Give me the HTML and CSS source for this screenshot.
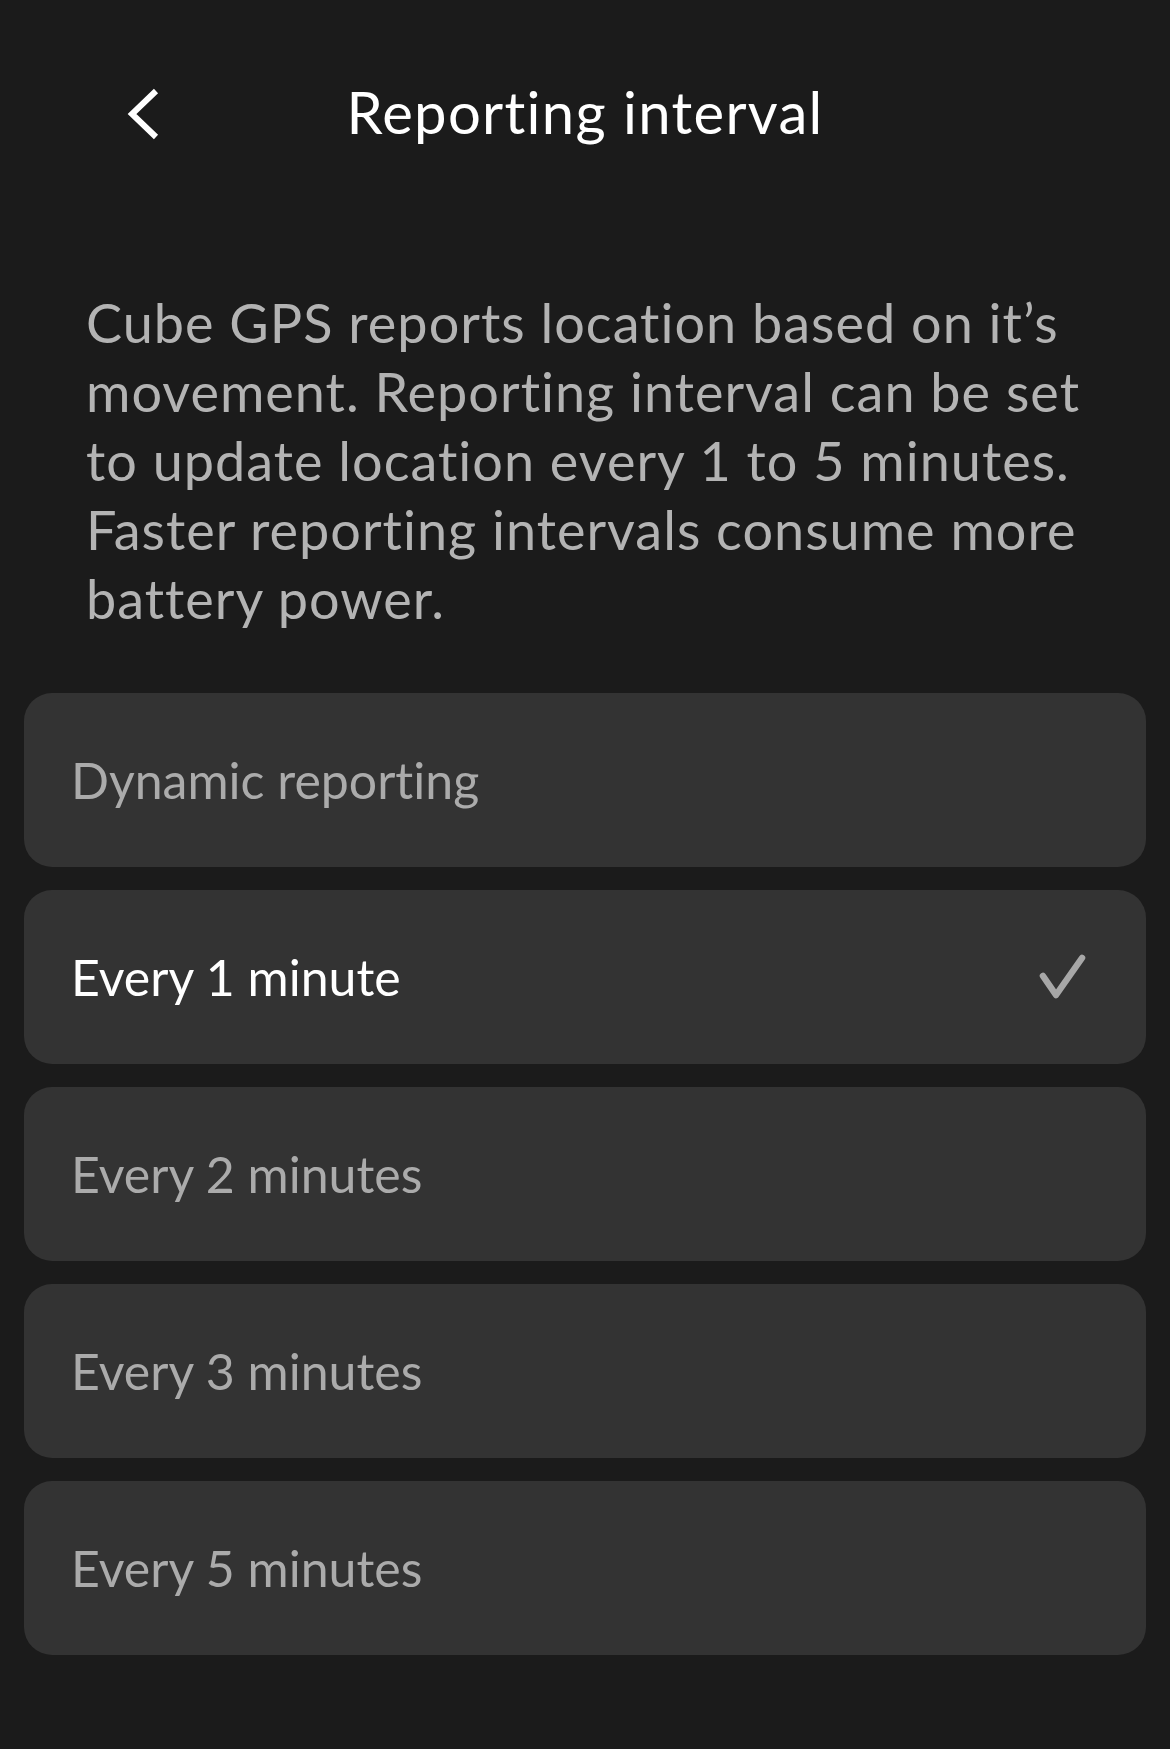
FILE: index.html
```html
<!DOCTYPE html>
<html lang="en">
<head>
<meta charset="utf-8">
<title>Reporting interval</title>
<link rel="stylesheet" href="styles.css">
</head>
<body>
<div class="screen">
  <header class="topbar">
    <button class="back" aria-label="Back">
      <svg width="34" height="52" viewBox="0 0 34 52"><polyline points="30,3 6,26 30,49" fill="none" stroke="#ffffff" stroke-width="6" stroke-linecap="butt" stroke-linejoin="miter"/></svg>
    </button>
    <h1 class="title">Reporting interval</h1>
  </header>
  <p class="intro">Cube GPS reports location based on it’s movement. Reporting interval can be set to update location every 1 to 5 minutes. Faster reporting intervals consume more battery power.</p>
  <ul class="options">
    <li class="option">Dynamic reporting</li>
    <li class="option selected">Every 1 minute
      <svg class="check" width="52" height="48" viewBox="0 0 52 48"><polyline points="6,23 19,42 45,5" fill="none" stroke="#a7a7a7" stroke-width="6.5" stroke-linecap="round" stroke-linejoin="round"/></svg>
    </li>
    <li class="option">Every 2 minutes</li>
    <li class="option">Every 3 minutes</li>
    <li class="option">Every 5 minutes</li>
  </ul>
</div>
</body>
</html>
```
FILE: styles.css
```css
html, body {
  margin: 0;
  padding: 0;
  background: #1b1b1b;
}
.screen {
  width: 1170px;
  min-height: 1749px;
  background: #1b1b1b;
  font-family: "Lato", "Open Sans", sans-serif;
  font-variant-ligatures: none;
  color: #ffffff;
}
.topbar {
  position: relative;
  height: 224px;
  display: flex;
  align-items: center;
  justify-content: center;
}
.back {
  position: absolute;
  left: 126px;
  top: 88px;
  padding: 0;
  margin: 0;
  border: 0;
  background: none;
  width: 34px;
  height: 52px;
}
.back svg {
  display: block;
}
.title {
  margin: 0;
  font-weight: 400;
  font-size: 58px;
  letter-spacing: 1.3px;
  line-height: 70px;
  color: #ffffff;
}
.intro {
  margin: 0;
  padding: 64px 72px 0 86px;
  font-size: 54px;
  letter-spacing: 1px;
  line-height: 69px;
  color: #b3b3b3;
}
.options {
  list-style: none;
  margin: 0;
  padding: 60px 24px 0 24px;
  display: flex;
  flex-direction: column;
  gap: 23px;
}
.option {
  height: 174px;
  border-radius: 28px;
  background: #333333;
  display: flex;
  align-items: center;
  justify-content: space-between;
  padding: 0 57px 0 47px;
  font-size: 50px;
  color: #ababab;
}
.option.selected {
  color: #ffffff;
}
.check {
  display: block;
}
```
